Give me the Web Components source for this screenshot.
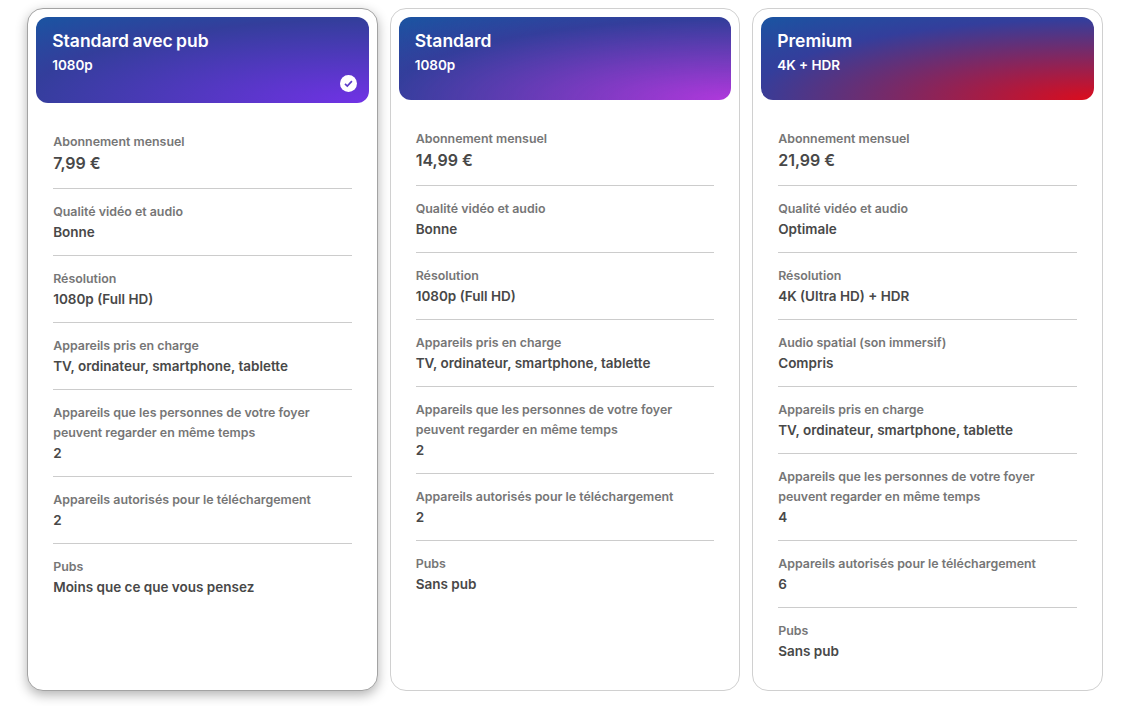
<!DOCTYPE html>
<html lang="fr">
<head>
<meta charset="utf-8">
<title>Offres</title>
<style>
  html, body { margin: 0; background: #fff; }
  body { font-family: Inter, "Liberation Sans", sans-serif; }
</style>
</head>
<body>
<plan-grid>
  <plan-card name="Standard avec pub" res="1080p" tier="ads" selected>
    <plan-row label="Abonnement mensuel" value="7,99 €" price></plan-row>
    <plan-row label="Qualité vidéo et audio" value="Bonne"></plan-row>
    <plan-row label="Résolution" value="1080p (Full HD)"></plan-row>
    <plan-row label="Appareils pris en charge" value="TV, ordinateur, smartphone, tablette"></plan-row>
    <plan-row label="Appareils que les personnes de votre foyer peuvent regarder en même temps" value="2"></plan-row>
    <plan-row label="Appareils autorisés pour le téléchargement" value="2"></plan-row>
    <plan-row label="Pubs" value="Moins que ce que vous pensez" last></plan-row>
  </plan-card>
  <plan-card name="Standard" res="1080p" tier="standard">
    <plan-row label="Abonnement mensuel" value="14,99 €" price></plan-row>
    <plan-row label="Qualité vidéo et audio" value="Bonne"></plan-row>
    <plan-row label="Résolution" value="1080p (Full HD)"></plan-row>
    <plan-row label="Appareils pris en charge" value="TV, ordinateur, smartphone, tablette"></plan-row>
    <plan-row label="Appareils que les personnes de votre foyer peuvent regarder en même temps" value="2"></plan-row>
    <plan-row label="Appareils autorisés pour le téléchargement" value="2"></plan-row>
    <plan-row label="Pubs" value="Sans pub" last></plan-row>
  </plan-card>
  <plan-card name="Premium" res="4K + HDR" tier="premium">
    <plan-row label="Abonnement mensuel" value="21,99 €" price></plan-row>
    <plan-row label="Qualité vidéo et audio" value="Optimale"></plan-row>
    <plan-row label="Résolution" value="4K (Ultra HD) + HDR"></plan-row>
    <plan-row label="Audio spatial (son immersif)" value="Compris"></plan-row>
    <plan-row label="Appareils pris en charge" value="TV, ordinateur, smartphone, tablette"></plan-row>
    <plan-row label="Appareils que les personnes de votre foyer peuvent regarder en même temps" value="4"></plan-row>
    <plan-row label="Appareils autorisés pour le téléchargement" value="6"></plan-row>
    <plan-row label="Pubs" value="Sans pub" last></plan-row>
  </plan-card>
</plan-grid>

<script>
class PlanGrid extends HTMLElement {
  constructor() {
    super();
    this.attachShadow({ mode: 'open' });
    this.shadowRoot.innerHTML = /* html */ `
      <style>
        :host {
          display: grid;
          grid-template-columns: repeat(3, 350.5px);
          column-gap: 12px;
          padding: 8px 0 15px 27.2px;
          height: 683px;
        }
      </style>
      <slot></slot>`;
  }
}

const ACCENTS = { ads: '#7132e6', standard: '#b038dc', premium: '#dc0c1c' };

class PlanCard extends HTMLElement {
  constructor() {
    super();
    this.attachShadow({ mode: 'open' });
    const selected = this.hasAttribute('selected');
    const accent = ACCENTS[this.getAttribute('tier')];
    this.shadowRoot.innerHTML = /* html */ `
      <style>
        :host {
          display: block;
          box-sizing: border-box;
          height: 683px;
          padding: 8px 8px 0;
          background: #fff;
          border: 1px solid ${selected ? '#a3a3a3' : '#d0d0d0'};
          border-radius: 16px;
          ${selected ? 'box-shadow: 0 4px 12px rgba(0,0,0,0.3);' : ''}
        }
        header {
          position: relative;
          box-sizing: border-box;
          height: ${selected ? '86px' : '83px'};
          padding: 12px 16px;
          border-radius: 12px;
          color: #fff;
          background:
            radial-gradient(140.76% 131.96% at 100% 100%, ${accent} 0%, rgba(74,42,150,0.5) 73.57%, rgba(74,42,150,0) 100%),
            #1d52a1;
        }
        h2 { margin: 0; font-size: 17.5px; line-height: 24px; font-weight: 600; word-spacing: -1px; }
        p { margin: 2px 0 0; font-size: 13.5px; line-height: 20px; font-weight: 600; }
        svg { position: absolute; right: 12px; bottom: 11px; }
        .rows { padding: 16px 17px 0; }
      </style>
      <header>
        <h2>${this.getAttribute('name')}</h2>
        <p>${this.getAttribute('res')}</p>
        ${selected ? `<svg width="17" height="17" viewBox="0 0 17 17" aria-hidden="true">
          <circle cx="8.5" cy="8.5" r="8.5" fill="#fff"/>
          <path d="M5 8.8 7.3 11l4.6-4.8" fill="none" stroke="#5a3bc8" stroke-width="1.7"/>
        </svg>` : ''}
      </header>
      <div class="rows"><slot></slot></div>`;
  }
}

class PlanRow extends HTMLElement {
  constructor() {
    super();
    this.attachShadow({ mode: 'open' });
    const price = this.hasAttribute('price');
    const last = this.hasAttribute('last');
    this.shadowRoot.innerHTML = /* html */ `
      <style>
        :host {
          display: block;
          padding: 13px 0;
          ${last ? '' : 'border-bottom: 1px solid #ccc;'}
        }
        .label { font-size: 12.4px; line-height: 20px; font-weight: 600; color: #767676; }
        .value {
          font-size: ${price ? '16px' : '13.5px'};
          line-height: ${price ? '22px' : '20px'};
          ${price ? 'padding-bottom: 1px;' : ''}
          font-weight: 600;
          color: #484848;
        }
      </style>
      <div class="label">${this.getAttribute('label')}</div>
      <div class="value">${this.getAttribute('value')}</div>`;
  }
}

customElements.define('plan-grid', PlanGrid);
customElements.define('plan-card', PlanCard);
customElements.define('plan-row', PlanRow);
</script>
</body>
</html>
